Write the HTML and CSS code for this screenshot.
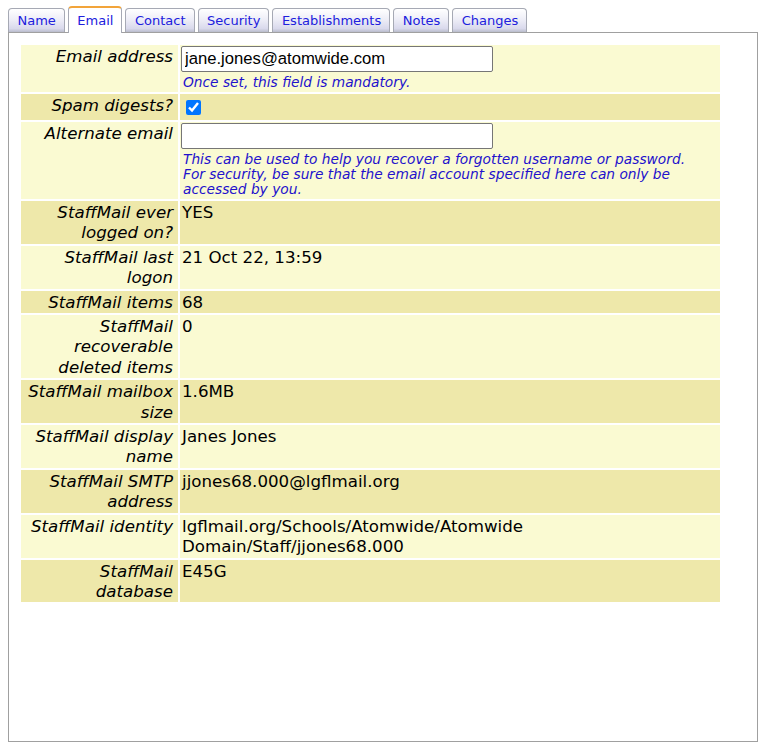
FILE: index.html
```html
<!DOCTYPE html>
<html lang="en">
<head>
  <meta charset="UTF-8" />
  <title>User details | Email</title>
  <link rel="stylesheet" href="styles.css">
</head>
<body>

  <!-- Section tabs -->
  <nav class="tabs">
    <a href="#name" class="tab">Name</a>
    <a href="#email" class="tab active">Email</a>
    <a href="#contact" class="tab">Contact</a>
    <a href="#security" class="tab">Security</a>
    <a href="#establishments" class="tab">Establishments</a>
    <a href="#notes" class="tab">Notes</a>
    <a href="#changes" class="tab">Changes</a>
  </nav>

  <div class="panel">
    <table class="details">
      <colgroup>
        <col class="label-col">
        <col>
      </colgroup>
      <tbody>
        <tr class="light">
          <th>Email address</th>
          <td class="field">
            <input type="text" value="jane.jones@atomwide.com">
            <div class="hint">Once set, this field is mandatory.</div>
          </td>
        </tr>
        <tr class="dark">
          <th>Spam digests?</th>
          <td class="field"><input type="checkbox" checked></td>
        </tr>
        <tr class="light">
          <th>Alternate email</th>
          <td class="field">
            <input type="text" value="">
            <div class="hint">This can be used to help you recover a forgotten username or password.<br>
              For security, be sure that the email account specified here can only be accessed by you.</div>
          </td>
        </tr>

        <!-- Mailbox info (read only) -->
        <tr class="dark">
          <th>StaffMail ever logged on?</th>
          <td>YES</td>
        </tr>
        <tr class="light">
          <th>StaffMail last logon</th>
          <td>21 Oct 22, 13:59</td>
        </tr>
        <tr class="dark">
          <th>StaffMail items</th>
          <td>68</td>
        </tr>
        <tr class="light">
          <th>StaffMail recoverable deleted items</th>
          <td>0</td>
        </tr>
        <tr class="dark">
          <th>StaffMail mailbox size</th>
          <td>1.6MB</td>
        </tr>
        <tr class="light">
          <th>StaffMail display name</th>
          <td>Janes Jones</td>
        </tr>
        <tr class="dark">
          <th>StaffMail SMTP address</th>
          <td>jjones68.000@lgflmail.org</td>
        </tr>
        <tr class="light">
          <th>StaffMail identity</th>
          <td>lgflmail.org/Schools/Atomwide/Atomwide Domain/Staff/jjones68.000</td>
        </tr>
        <tr class="dark">
          <th>StaffMail database</th>
          <td>E45G</td>
        </tr>
      </tbody>
    </table>
  </div>

</body>
</html>
```

FILE: styles.css
```css
/* Base */
body {
  margin: 6px 9px 0 8px;
  font-family: "DejaVu Sans", Verdana, sans-serif;
  font-size: 16.67px;
  color: #000;
  background: #fff;
}

/* Tabs */
.tabs {
  display: flex;
  align-items: flex-end;
  gap: 3px;
  height: 26px;
}

.tab {
  display: block;
  height: 23px;
  line-height: 23px;
  padding: 0 8px 0 8.5px;
  font-size: 13px;
  color: #2020dd;
  text-decoration: none;
  border: 1px solid #a6a9b4;
  border-bottom: none;
  border-radius: 4px 4px 0 0;
  background: linear-gradient(to bottom, #ffffff 0%, #eeeef7 45%, #d9d9ec 85%, #b9bccb 100%);
}

.tab.active {
  height: 25px;
  line-height: 26px;
  background: #fff;
  border-top: 2px solid #f2a43a;
  position: relative;
  top: 1px;
}

/* Content panel */
.panel {
  box-sizing: border-box;
  height: 710px;
  border: 1px solid #a0a0a0;
  padding: 10px;
}

/* Details table */
.details {
  table-layout: fixed;
  width: 703px;
  border-spacing: 2px;
}

.label-col {
  width: 157px;
}

.details th,
.details td {
  box-sizing: border-box;
  vertical-align: top;
  line-height: 20.4px;
  padding: 2px 2px 0 2px;
}

.details th {
  font-weight: normal;
  font-style: italic;
  text-align: right;
  padding-right: 5px;
}

.details td.field {
  padding: 1px;
}

tr.light th,
tr.light td {
  background: #fafad2;
}

tr.dark th,
tr.dark td {
  background: #eee8aa;
}

/* Form fields */
.field input[type="text"] {
  display: block;
  box-sizing: border-box;
  width: 312px;
  height: 26px;
  margin: 0 0 3px 0;
  padding: 1px 3px;
  border: 1px solid #767676;
  border-radius: 2px;
  font-family: "Liberation Sans", Arial, sans-serif;
  font-size: 16.67px;
  color: #000;
  background: #fff;
}

.field input[type="checkbox"] {
  display: block;
  width: 15px;
  height: 15px;
  margin: 5px 0 4px 5px;
  accent-color: #0075ff;
}

.hint {
  font-size: 13.75px;
  font-style: italic;
  line-height: 15px;
  color: #2211cc;
  padding: 0 0 1px 2px;
}
```
